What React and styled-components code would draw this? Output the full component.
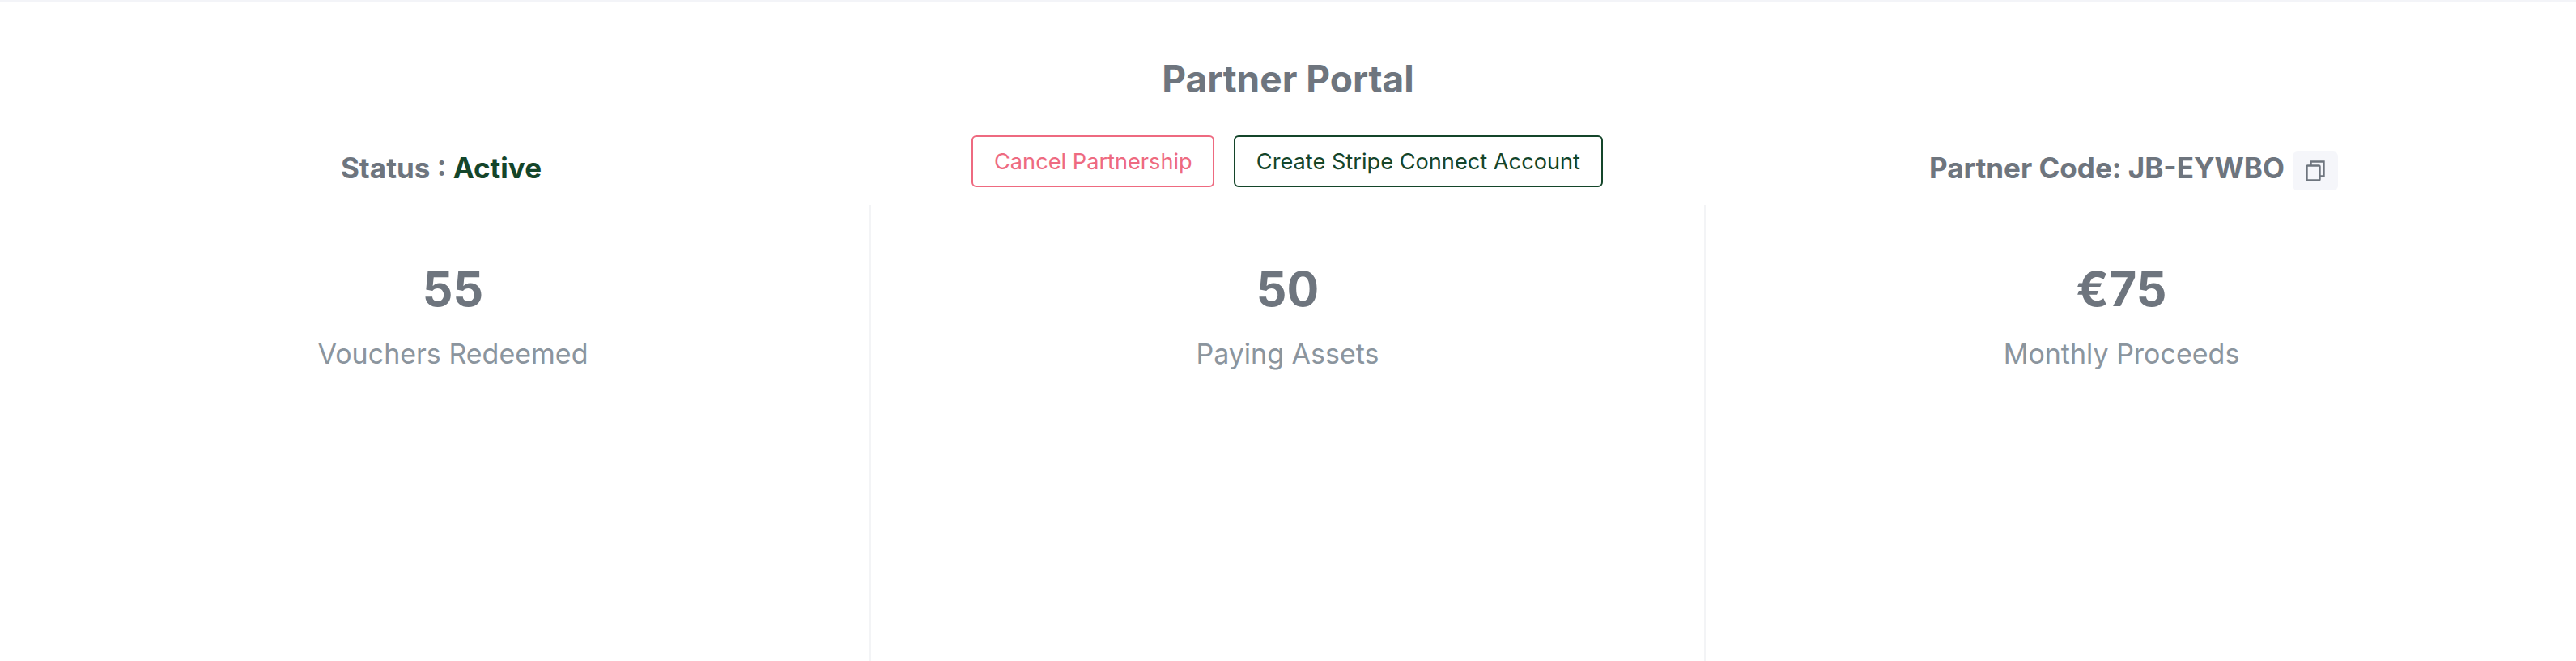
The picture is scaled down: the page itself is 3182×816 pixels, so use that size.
import React from "react";
import styled, { createGlobalStyle } from "styled-components";

const Global = createGlobalStyle`
  html, body { margin: 0; padding: 0; background: #fff; }
  body { font-family: Inter, "Liberation Sans", sans-serif; overflow: hidden; }
`;

const Page = styled.div`
  height: 816px;
  box-sizing: border-box;
  border-top: 2px solid #f3f4f8;
  padding: 0 45px;
  display: flex;
  flex-direction: column;
`;

const Title = styled.h1`
  margin: 0;
  padding-top: 68px;
  line-height: 54px;
  font-size: 46px;
  font-weight: 700;
  color: #6e757e;
  text-align: center;
`;

const HeaderRow = styled.div`
  display: grid;
  grid-template-columns: repeat(3, 1031px);
  margin-top: 43px;
  height: 86px;
`;

const HeaderCell = styled.div`
  display: flex;
  justify-content: center;
  align-items: flex-start;
  gap: ${(p) => p.$gap || 0}px;
  padding-right: ${(p) => p.$right || 0}px;
  padding-left: ${(p) => p.$left || 0}px;
`;

const StatusText = styled.div`
  font-size: 35px;
  font-weight: 700;
  line-height: 44px;
  margin-top: 18px;
  color: #6e757e;
`;

const Active = styled.span`
  color: #14452a;
`;

const Button = styled.button`
  height: 64px;
  padding: 0 25.5px;
  margin: 0;
  background: #fff;
  border: 2px solid ${(p) => p.$color};
  border-radius: 6px;
  color: ${(p) => p.$color};
  font-family: inherit;
  font-size: 27.2px;
  font-weight: 400;
  white-space: nowrap;
`;

const CopyButton = styled.button`
  width: 56px;
  height: 48px;
  margin: 20px 0 0;
  padding: 0;
  border: 0;
  border-radius: 6px;
  background: #f5f6fa;
  display: flex;
  align-items: center;
  justify-content: center;
  color: #6e757e;
`;

const Stats = styled.div`
  flex: 1;
  display: grid;
  grid-template-columns: repeat(3, 1031px);
`;

const Stat = styled.div`
  display: flex;
  flex-direction: column;
  align-items: center;
  padding-top: 68px;
  box-sizing: border-box;
  border-right: ${(p) => (p.$last ? "0" : "2px solid #f3f4f6")};
  margin-right: ${(p) => (p.$last ? "4px" : "0")};
`;

const Value = styled.div`
  font-size: 59px;
  line-height: 72px;
  font-weight: 700;
  color: #6e757e;
`;

const Label = styled.div`
  margin-top: 24px;
  font-size: 34px;
  line-height: 40px;
  color: #8b959e;
`;

const CopyIcon = () => (
  <svg width="24" height="26" viewBox="0 0 24 26" fill="none" stroke="currentColor" strokeWidth="2.4">
    <rect x="1.5" y="6.5" width="16" height="18" rx="1" />
    <path d="M6.5 6.5V1.5H22.5V19.5H17.5" />
  </svg>
);

export default function App() {
  return (
    <>
      <Global />
      <Page>
        <Title>Partner Portal</Title>
        <HeaderRow>
          <HeaderCell $right={31}>
            <StatusText>
              Status : <Active>Active</Active>
            </StatusText>
          </HeaderCell>
          <HeaderCell $right={3} $gap={24}>
            <Button $color="#ee6a80">Cancel Partnership</Button>
            <Button $color="#14452a">Create Stripe Connect Account</Button>
          </HeaderCell>
          <HeaderCell $left={26} $gap={10}>
            <StatusText>Partner Code: JB-EYWBO</StatusText>
            <CopyButton aria-label="Copy partner code">
              <CopyIcon />
            </CopyButton>
          </HeaderCell>
        </HeaderRow>
        <Stats>
          <Stat>
            <Value>55</Value>
            <Label>Vouchers Redeemed</Label>
          </Stat>
          <Stat>
            <Value>50</Value>
            <Label>Paying Assets</Label>
          </Stat>
          <Stat $last>
            <Value>€75</Value>
            <Label>Monthly Proceeds</Label>
          </Stat>
        </Stats>
      </Page>
    </>
  );
}
